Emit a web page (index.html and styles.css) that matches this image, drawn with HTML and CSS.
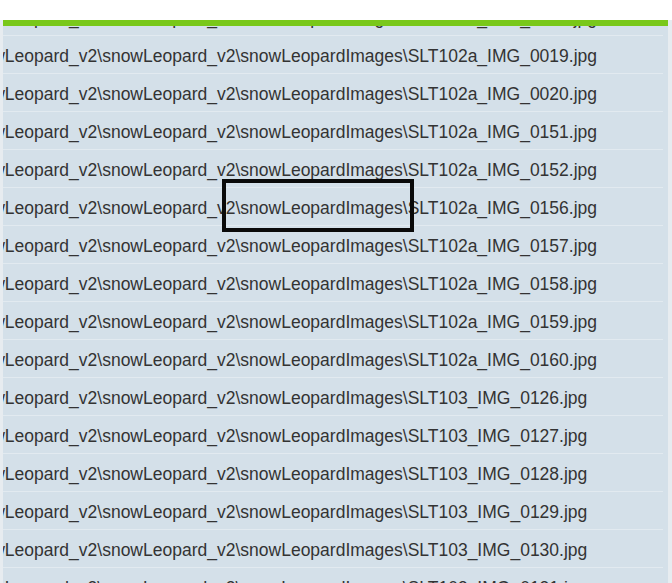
FILE: index.html
```html
<!DOCTYPE html>
<html lang="en">
<head>
<meta charset="utf-8">
<title>Files</title>
<link rel="stylesheet" href="styles.css">
</head>
<body>
<div class="screen">
  <div class="topbar"></div>
  <div class="panel">
    <ul class="rows">
      <li class="row row-partial"><span class="path">snowLeopard_v2\snowLeopard_v2\snowLeopardImages\SLT102a_IMG_0018.jpg</span></li>
      <li class="row"><span class="path">snowLeopard_v2\snowLeopard_v2\snowLeopardImages\SLT102a_IMG_0019.jpg</span></li>
      <li class="row"><span class="path">snowLeopard_v2\snowLeopard_v2\snowLeopardImages\SLT102a_IMG_0020.jpg</span></li>
      <li class="row"><span class="path">snowLeopard_v2\snowLeopard_v2\snowLeopardImages\SLT102a_IMG_0151.jpg</span></li>
      <li class="row"><span class="path">snowLeopard_v2\snowLeopard_v2\snowLeopardImages\SLT102a_IMG_0152.jpg</span></li>
      <li class="row"><span class="path">snowLeopard_v2\snowLeopard_v2\snowLeopardImages\SLT102a_IMG_0156.jpg</span></li>
      <li class="row"><span class="path">snowLeopard_v2\snowLeopard_v2\snowLeopardImages\SLT102a_IMG_0157.jpg</span></li>
      <li class="row"><span class="path">snowLeopard_v2\snowLeopard_v2\snowLeopardImages\SLT102a_IMG_0158.jpg</span></li>
      <li class="row"><span class="path">snowLeopard_v2\snowLeopard_v2\snowLeopardImages\SLT102a_IMG_0159.jpg</span></li>
      <li class="row"><span class="path">snowLeopard_v2\snowLeopard_v2\snowLeopardImages\SLT102a_IMG_0160.jpg</span></li>
      <li class="row"><span class="path">snowLeopard_v2\snowLeopard_v2\snowLeopardImages\SLT103_IMG_0126.jpg</span></li>
      <li class="row"><span class="path">snowLeopard_v2\snowLeopard_v2\snowLeopardImages\SLT103_IMG_0127.jpg</span></li>
      <li class="row"><span class="path">snowLeopard_v2\snowLeopard_v2\snowLeopardImages\SLT103_IMG_0128.jpg</span></li>
      <li class="row"><span class="path">snowLeopard_v2\snowLeopard_v2\snowLeopardImages\SLT103_IMG_0129.jpg</span></li>
      <li class="row"><span class="path">snowLeopard_v2\snowLeopard_v2\snowLeopardImages\SLT103_IMG_0130.jpg</span></li>
      <li class="row"><span class="path">snowLeopard_v2\snowLeopard_v2\snowLeopardImages\SLT103_IMG_0131.jpg</span></li>
    </ul>
  </div>
  <div class="highlight"></div>
</div>
</body>
</html>
```

FILE: styles.css
```css
html, body {
  margin: 0;
  padding: 0;
}

body {
  width: 672px;
  height: 583px;
  overflow: hidden;
  background: #e7ecf0;
  font-family: "Liberation Sans", Arial, sans-serif;
}

.screen {
  position: relative;
  width: 672px;
  height: 583px;
  overflow: hidden;
  display: flex;
  flex-direction: column;
}

.topbar {
  height: 20px;
  background: #ffffff;
  flex: none;
}

.panel {
  flex: 1;
  margin: 0 4px 0 3px;
  background: #d4e0e9;
  border-top: 6px solid #79c81a;
  overflow: hidden;
}

.rows {
  list-style: none;
  margin: 0;
  padding: 0;
}

.row {
  height: 30px;
  padding-top: 7px;
  margin-right: 5px;
  border-bottom: 1px solid #e2eaf0;
  overflow: hidden;
  white-space: nowrap;
  font-size: 17.5px;
  line-height: 26px;
  color: #333333;
  text-indent: -39px;
}

.row-partial {
  height: 9px;
  padding-top: 0;
}

.row-partial .path {
  display: block;
  margin-top: -21px;
}

.highlight {
  position: absolute;
  left: 222px;
  top: 179px;
  width: 184px;
  height: 45px;
  border: 4px solid #0a0a0a;
}
```
